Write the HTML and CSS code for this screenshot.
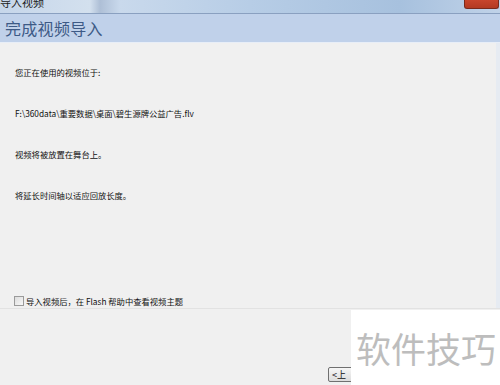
FILE: index.html
```html
<!DOCTYPE html>
<html lang="zh-CN">
<head>
  <meta charset="UTF-8">
  <title>导入视频</title>
  <link rel="stylesheet" href="styles.css">
</head>
<body>
  <div class="window">
    <div class="titlebar">
      <span class="title">导入视频</span>
      <span class="close-btn"></span>
    </div>
    <div class="banner">完成视频导入</div>

    <div class="content">
      <p class="line">您正在使用的视频位于:</p>
      <p class="line">F:\360data\重要数据\桌面\碧生源牌公益广告.flv</p>
      <p class="line">视频将被放置在舞台上。</p>
      <p class="line">将延长时间轴以适应回放长度。</p>

      <label class="help-check">
        <span class="box"></span>
        导入视频后，在 Flash 帮助中查看视频主题
      </label>
    </div>

    <div class="footer">
      <button class="nav-btn">&lt;上</button>
    </div>

    <div class="watermark">软件技巧</div>
  </div>
</body>
</html>
```

FILE: styles.css
```css
body {
  margin: 0;
  padding: 0;
  background-color: #f0f0f0;
  font-family: "Noto Sans CJK SC", "Liberation Sans", sans-serif;
}
.window {
  position: relative;
  width: 500px;
  height: 385px;
  overflow: hidden;
  background-color: #f0f0f0;
}
.titlebar {
  display: flex;
  align-items: flex-start;
  height: 13px;
  background: linear-gradient(90deg, #c6d6ea 0%, #d3e0ee 18%, #aebfd6 20%, #c9d9ec 24%, #b7cde6 50%, #a7c1de 80%, #c0d2e8 100%);
  overflow: hidden;
}
.title {
  margin-top: -6px;
  font-size: 11px;
  line-height: 16px;
  color: #1a1a1a;
}
.close-btn {
  margin-left: auto;
  margin-right: 1px;
  width: 33px;
  height: 8px;
  background: linear-gradient(180deg, #c8452c, #b33a22);
  border: 1px solid #7a2a1c;
  border-top: none;
  border-radius: 0 0 3px 3px;
}
.banner {
  height: 28px;
  border-top: 1px solid #8aa0c0;
  border-bottom: 1px solid #e8eef7;
  background-color: #c0d1ea;
  color: #3d5a86;
  font-size: 16px;
  line-height: 28px;
  padding-left: 5px;
  letter-spacing: 0.3px;
}
.content {
  height: 265px;
  box-sizing: border-box;
  padding: 22px 0 0 15px;
  border-right: 4px solid #e6ebf2;
  font-size: 8.3px;
  color: #111;
}
.line {
  margin: 0 0 27px 0;
  height: 14px;
  line-height: 14px;
}
.help-check {
  display: flex;
  align-items: center;
  height: 14px;
  margin-top: 92px;
  margin-left: -1px;
}
.box {
  width: 8px;
  height: 8px;
  margin-right: 2px;
  border: 1px solid #9a9a9a;
  background: linear-gradient(135deg, #dcdcdc, #f8f8f8);
}
.footer {
  height: 76px;
  border-top: 1px solid #e2e2e2;
  background-color: #f0f0f0;
  display: flex;
  align-items: flex-end;
  padding-left: 328px;
}
.nav-btn {
  margin-bottom: 3px;
  width: 30px;
  height: 15px;
  padding: 0 0 0 3px;
  font-family: inherit;
  font-size: 9px;
  line-height: 13px;
  text-align: left;
  border: 1px solid #707070;
  border-radius: 2px;
  background: linear-gradient(180deg, #f6f6f6, #dddddd);
  color: #111;
}
.watermark {
  position: absolute;
  left: 351px;
  top: 310px;
  width: 149px;
  height: 75px;
  box-sizing: border-box;
  padding: 8px 0 0 5px;
  background-color: #fff;
  color: #bdbdbd;
  font-size: 35px;
  line-height: 60px;
  white-space: nowrap;
}
```
